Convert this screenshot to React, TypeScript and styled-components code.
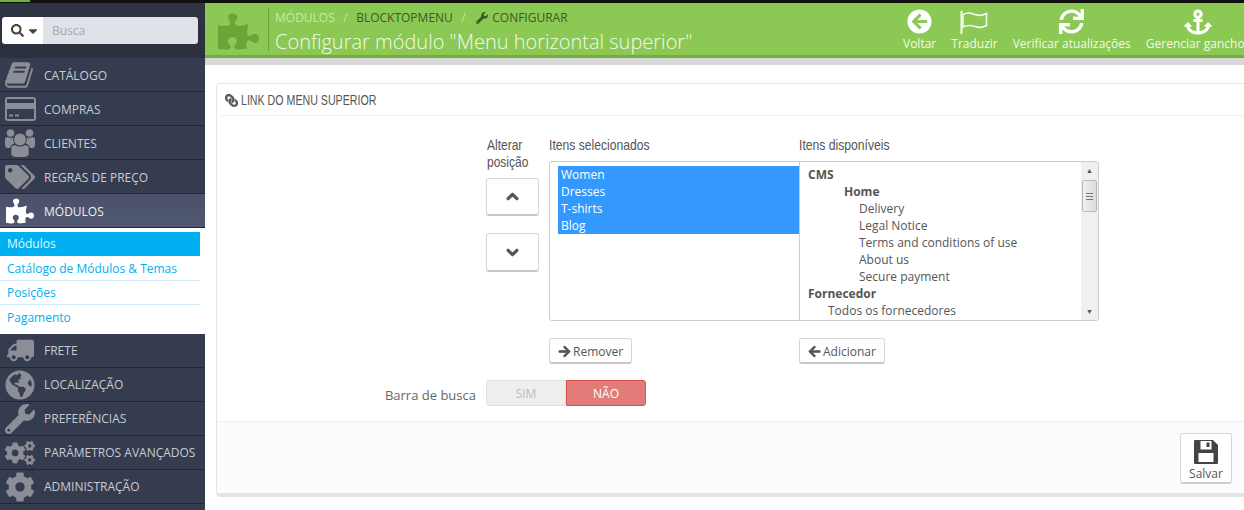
import React from "react";
import styled, { createGlobalStyle } from "styled-components";
import {
  FaAnchor,
  FaArrowCircleLeft,
  FaArrowLeft,
  FaArrowRight,
  FaCaretDown,
  FaChevronDown,
  FaChevronUp,
  FaCog,
  FaCogs,
  FaGlobeAmericas,
  FaLink,
  FaPuzzlePiece,
  FaSearch,
  FaSync,
  FaTags,
  FaTruck,
  FaWrench,
} from "react-icons/fa";

const GlobalStyle = createGlobalStyle`
  html, body {
    margin: 0;
    padding: 0;
    background: #fff;
  }
  body {
    font-family: "Open Sans", "Liberation Sans", sans-serif;
    font-size: 12px;
    color: #555;
  }
  * {
    box-sizing: border-box;
  }
`;

const Page = styled.div`
  width: 1244px;
  height: 510px;
  overflow: hidden;
  display: flex;
  flex-direction: column;
`;

const TopBar = styled.div`
  height: 3px;
  flex: none;
  background: #111;
`;

const TopBarLogo = styled.div`
  width: 30px;
  height: 2px;
  background: #6fb33c;
`;

const Body = styled.div`
  flex: 1;
  min-height: 0;
  display: flex;
`;

/* sidebar */
const Sidebar = styled.nav`
  width: 205px;
  flex: none;
  background: #363c4f;
`;

const SearchArea = styled.div`
  height: 55px;
  padding: 14px 7px 0 2px;
  background: linear-gradient(#2f3443, #2b303e);
`;

const SearchGroup = styled.div`
  height: 27px;
  display: flex;
  border-radius: 3px;
  overflow: hidden;
`;

const SearchButton = styled.div`
  width: 41px;
  display: flex;
  align-items: center;
  gap: 2px;
  padding-left: 9px;
  background: #fff;
  color: #444;
  font-size: 13px;
`;

const SearchInput = styled.div`
  flex: 1;
  display: flex;
  align-items: center;
  padding-left: 9px;
  background: #dfe2e8;
  color: #a4a8b0;
  font-size: 12px;
`;

const NavItem = styled.div<{ $active?: boolean; $lower?: boolean }>`
  height: 34px;
  display: flex;
  align-items: center;
  padding-top: ${(p) => (p.$lower ? 1 : 0)}px;
  border-bottom: 1px solid #23272f;
  background: ${(p) =>
    p.$active ? "linear-gradient(#4a5169, #505771)" : "#363c4f"};
  color: ${(p) => (p.$active ? "#f0f0f0" : "#c8cbd2")};
  font-size: 12px;
  text-transform: uppercase;
`;

const NavIcon = styled.span<{ $active?: boolean }>`
  width: 44px;
  flex: none;
  display: flex;
  justify-content: center;
  padding-right: 4px;
  font-size: ${(p) => (p.$active ? 28 : 30)}px;
  line-height: 0;
  color: ${(p) => (p.$active ? "#fff" : "#8b8e96")};
`;

const FlippedTruck = styled(FaTruck)`
  transform: scaleX(-1);
  font-size: 27px;
`;

const SubMenu = styled.div`
  height: 106px;
  padding: 4px 5px 0 0;
  background: #fff;
`;

const SubItem = styled.div<{ $active?: boolean }>`
  height: 24.4px;
  display: flex;
  align-items: center;
  padding-left: 7px;
  font-size: 12px;
  color: ${(p) => (p.$active ? "#e6f7fe" : "#00aff0")};
  background: ${(p) => (p.$active ? "#00aff0" : "transparent")};
  border-bottom: 1px solid ${(p) => (p.$active ? "#00aff0" : "#d3eefa")};
  &:last-child {
    border-bottom: none;
  }
`;

/* page head */
const Main = styled.main`
  flex: 1;
  min-width: 0;
  display: flex;
  flex-direction: column;
`;

const PageHead = styled.header`
  height: 55px;
  flex: none;
  display: flex;
  background: #8bc954;
  border-bottom: 3px solid #72ad3d;
`;

const HeadPuzzle = styled.div`
  width: 63px;
  flex: none;
  display: flex;
  align-items: center;
  padding-left: 13px;
  margin-top: 5px;
  font-size: 41px;
  line-height: 0;
  color: #6ba538;
`;

const HeadText = styled.div`
  flex: 1;
  margin: 5px 0 4px;
  padding: 2px 0 0 6px;
  border-left: 1px solid #6ba538;
`;

const Breadcrumb = styled.div`
  display: flex;
  align-items: center;
  height: 15px;
  font-size: 12px;
  color: #3b5a22;
`;

const CrumbLink = styled.span<{ $light?: boolean }>`
  color: ${(p) => (p.$light ? "#c9e8ac" : "#3b5a22")};
`;

const CrumbSlash = styled.span`
  margin: 0 8.5px;
  color: #c9e8ac;
`;

const CrumbIcon = styled.span`
  display: inline-flex;
  margin: 0 4px 0 2px;
  font-size: 12px;
`;

const PageTitle = styled.h2`
  margin: 5px 0 0;
  font-size: 20px;
  line-height: 24px;
  font-weight: 300;
  color: #f2f9ea;
  white-space: nowrap;
`;

const Toolbar = styled.div`
  display: flex;
  gap: 15px;
  width: 341px;
  flex: none;
  padding-top: 5px;
  overflow: hidden;
`;

const ToolItem = styled.div`
  display: flex;
  flex: none;
  flex-direction: column;
  align-items: center;
  color: #f2f9ea;
  font-size: 12px;
  white-space: nowrap;
`;

const ToolIcon = styled.span<{ $big?: boolean }>`
  height: 27px;
  display: flex;
  align-items: center;
  color: #fff;
  font-size: ${(p) => (p.$big ? 28 : 25)}px;
`;

const GrayStrip = styled.div`
  height: 7px;
  flex: none;
  background: #d8d8d8;
`;

/* panel */
const Content = styled.div`
  flex: 1;
  min-height: 0;
  padding: 18px 0 0 11px;
`;

const Panel = styled.section`
  width: 1060px;
  height: 414px;
  background: #fff;
  border: 1px solid #e6e6e6;
  border-bottom: 4px solid #e4e4e4;
  border-radius: 4px 0 0 4px;
  display: flex;
  flex-direction: column;
`;

const PanelHead = styled.div`
  height: 32px;
  flex: none;
  margin-left: 3px;
  padding: 1px 0 0 5px;
  display: flex;
  align-items: center;
  gap: 3px;
  border-bottom: 1px solid #eee;
  color: #555;
`;

const PanelIcon = styled(FaLink)`
  font-size: 13px;
  transform: scaleX(-1);
  stroke: currentColor;
  stroke-width: 20;
`;

const Condensed = styled.span<{ $scale: number }>`
  display: inline-block;
  font-family: "Liberation Sans", sans-serif;
  font-size: 15px;
  line-height: 17px;
  white-space: nowrap;
  transform: scaleX(${(p) => p.$scale});
  transform-origin: left center;
`;

const PanelTitle = styled(Condensed)`
  text-transform: uppercase;
  font-size: 14px;
`;

const FormBody = styled.div`
  flex: 1;
  padding: 20px 0 0 269px;
`;

const Picker = styled.div`
  display: flex;
`;

const MoveCol = styled.div`
  width: 63px;
  flex: none;
  display: flex;
  flex-direction: column;
`;

const ListCol = styled.div<{ $wide?: boolean }>`
  width: ${(p) => (p.$wide ? 300 : 250)}px;
  flex: none;
  display: flex;
  flex-direction: column;
  align-items: flex-start;
`;

const ColTitle = styled.div`
  height: 17px;
  color: #555;
`;

const MoveTitle = styled.div`
  display: flex;
  flex-direction: column;
  padding-left: 1px;
  color: #555;
`;

const MoveButton = styled.div<{ $second?: boolean }>`
  width: 53px;
  height: ${(p) => (p.$second ? 39 : 38)}px;
  margin-top: ${(p) => (p.$second ? 17 : 8)}px;
  display: flex;
  align-items: center;
  justify-content: center;
  background: #fff;
  border: 1px solid #d8d8d8;
  border-bottom: 2px solid #c8c8c8;
  border-radius: 3px;
  color: #555;
  font-size: 13px;
  svg {
    stroke: currentColor;
    stroke-width: 45;
  }
`;

const ListBox = styled.div<{ $wide?: boolean }>`
  width: ${(p) => (p.$wide ? 300 : 251)}px;
  height: 160px;
  margin-top: 8px;
  display: flex;
  background: #fff;
  border: 1px solid #ccc;
  border-radius: ${(p) => (p.$wide ? "0 3px 3px 0" : "3px 0 0 3px")};
  font-size: 12px;
  overflow: hidden;
`;

const SelectedOptions = styled.div`
  flex: 1;
  margin: 4px 0 0 8px;
`;

const SelectedOption = styled.div`
  height: 17px;
  padding-left: 3px;
  line-height: 17px;
  background: #3399ff;
  color: #fff;
`;

const Options = styled.div`
  flex: 1;
  padding: 4px 0 0 8px;
  overflow: hidden;
`;

const OptionRow = styled.div<{ $indent?: number; $bold?: boolean }>`
  height: 17px;
  line-height: 17px;
  padding-left: ${(p) => p.$indent ?? 0}px;
  font-weight: ${(p) => (p.$bold ? 700 : 400)};
  white-space: nowrap;
`;

const Scrollbar = styled.div`
  width: 17px;
  flex: none;
  display: flex;
  flex-direction: column;
  background: #f0f0f0;
`;

const ScrollArrow = styled.div`
  height: 17px;
  flex: none;
  display: flex;
  align-items: center;
  justify-content: center;
  color: #505050;
  font-size: 7px;
`;

const ScrollThumb = styled.div`
  width: 15px;
  height: 32px;
  margin: 1px 0 0 1px;
  display: flex;
  align-items: center;
  justify-content: center;
  background: linear-gradient(90deg, #f0f0f0, #dcdcdc);
  border: 1px solid #b8b8b8;
  border-radius: 2px;
`;

const ScrollGrip = styled.div`
  width: 7px;
  height: 7px;
  border-top: 1px solid #777;
  border-bottom: 1px solid #777;
  background: linear-gradient(#777, #777) center / 100% 1px no-repeat;
`;

const ScrollSpacer = styled.div`
  flex: 1;
`;

const ActionButton = styled.div`
  height: 26px;
  margin-top: 17px;
  padding: 1px 8px 0;
  display: flex;
  align-items: center;
  gap: 2px;
  background: #fff;
  border: 1px solid #d8d8d8;
  border-bottom: 2px solid #c8c8c8;
  border-radius: 3px;
  color: #555;
  font-size: 12px;
`;

const ActionIcon = styled.span`
  display: inline-flex;
  font-size: 13px;
  svg {
    stroke: currentColor;
    stroke-width: 25;
  }
`;

const SwitchRow = styled.div`
  position: relative;
  margin-top: 16px;
`;

const SwitchLabel = styled.div`
  position: absolute;
  right: calc(100% + 10px);
  top: 7px;
  font-size: 13px;
  line-height: 16px;
  color: #666;
  white-space: nowrap;
`;

const Switch = styled.div`
  width: 160px;
  height: 26px;
  display: flex;
`;

const SwitchOption = styled.div<{ $on?: boolean }>`
  flex: 1;
  display: flex;
  align-items: center;
  justify-content: center;
  font-size: 12px;
  background: ${(p) => (p.$on ? "#e27c79" : "#eee")};
  color: ${(p) => (p.$on ? "#fff" : "#bbb")};
  border: 1px solid ${(p) => (p.$on ? "#d9534f" : "#e2e2e2")};
  border-radius: ${(p) => (p.$on ? "0 3px 3px 0" : "3px 0 0 3px")};
`;

const PanelFooter = styled.div`
  height: 72px;
  flex: none;
  padding: 11px 0 0 963px;
  background: #fbfcfd;
  border-top: 1px solid #eee;
`;

const SaveButton = styled.div`
  width: 52px;
  height: 51px;
  display: flex;
  flex-direction: column;
  align-items: center;
  padding-top: 6px;
  background: #fff;
  border: 1px solid #d8d8d8;
  border-bottom: 2px solid #cfcfcf;
  border-radius: 3px;
  font-size: 12px;
  line-height: 16px;
  color: #555;
`;

const SaveIconBox = styled.span`
  height: 27px;
  display: flex;
  line-height: 0;
`;

function BookIcon() {
  return (
    <svg width="30" height="30" viewBox="0 0 1792 1792" fill="currentColor">
      <path d="M1639 478q40 57 18 129l-275 906q-19 64-76.5 107.5t-122.5 43.5h-923q-77 0-148.5-53.5t-99.5-131.5q-24-67-2-127 0-4 3-27t4-37q1-8-3-21.5t-3-19.5q2-11 8-21t16.5-23.5 16.5-23.5q23-38 45-91.5t30-91.5q3-10 .5-30t-.5-28q3-11 17-28t17-23q21-36 42-92t25-90q1-9-2.5-32t.5-28q4-13 22-30.5t22-22.5q19-26 42.5-84.5t27.5-96.5q1-8-3-25.5t-2-26.5q2-8 9-18t18-23 17-21q8-12 16.5-30.5t15-35 16-36 19.5-32 26.5-23.5 36-11.5 47.5 5.5l-1 3q38-9 51-9h761q74 0 114 56t18 130l-274 906q-36 119-71.5 153.5t-128.5 34.5h-869q-27 0-38 15-11 16-1 43 24 70 144 70h923q29 0 56-15.5t35-41.5l300-987q7-22 5-57 38 15 59 43zm-1064 2q-4 13 2 22.5t20 9.5h608q13 0 25.5-9.5t16.5-22.5l21-64q4-13-2-22.5t-20-9.5h-608q-13 0-25.5 9.5t-16.5 22.5zm-83 256q-4 13 2 22.5t20 9.5h608q13 0 25.5-9.5t16.5-22.5l21-64q4-13-2-22.5t-20-9.5h-608q-13 0-25.5 9.5t-16.5 22.5z" />
    </svg>
  );
}

function CardIcon() {
  return (
    <svg width="31" height="24" viewBox="0 0 31 24" fill="currentColor">
      <path
        fillRule="evenodd"
        d="M3 0H28A3 3 0 0 1 31 3V21A3 3 0 0 1 28 24H3A3 3 0 0 1 0 21V3A3 3 0 0 1 3 0ZM2 2V6H29V2ZM2 12V22H29V12Z"
      />
      <path d="M4 17.5H8V19.5H4ZM10 17.5H14V19.5H10Z" />
    </svg>
  );
}

function UsersIcon() {
  return (
    <svg width="30" height="28" viewBox="0 0 30 28" fill="currentColor">
      <circle cx="15" cy="10.5" r="6" />
      <circle cx="5.5" cy="4" r="3.8" />
      <circle cx="24.5" cy="4" r="3.8" />
      <path d="M6.5 17.5Q8 16 10 16Q15 19 20 16Q22 16 23.5 17.5Q24 22 23.5 26Q22 28 19 28H11Q8 28 6.5 26Q6 22 6.5 17.5Z" />
      <path d="M0 9.5Q1 8 3 8Q5.5 9.5 8 8.5Q8 12 9.5 14.5Q6 15 5 19H2Q0 18 0 16Z" />
      <path d="M30 9.5Q29 8 27 8Q24.5 9.5 22 8.5Q22 12 20.5 14.5Q24 15 25 19H28Q30 18 30 16Z" />
    </svg>
  );
}

function FlagIcon() {
  return (
    <svg width="28" height="24" viewBox="0 0 28 24" fill="none" stroke="#f4faee">
      <path d="M1.5 1.5V23.5" strokeWidth="2" strokeLinecap="round" />
      <path
        d="M3 4.5C8 2 11 3 15 4.5S22 6 26.5 3.5V15.5C22 18 19 18 15 16.5S8 14.5 3 17Z"
        strokeWidth="1.6"
      />
    </svg>
  );
}

function SaveIcon() {
  return (
    <svg width="24" height="24" viewBox="0 0 24 24">
      <path
        fill="#444"
        fillRule="evenodd"
        d="M1 0H19L24 5V23A1 1 0 0 1 23 24H1A1 1 0 0 1 0 23V1A1 1 0 0 1 1 0ZM6.5 1V9.5H17.5V1ZM4.5 13V22H19.5V13Z"
      />
      <path fill="#444" d="M12.5 2.5H15.5V7H12.5Z" />
    </svg>
  );
}

const navTop = [
  { label: "Catálogo", icon: <BookIcon /> },
  { label: "Compras", icon: <CardIcon /> },
  { label: "Clientes", icon: <UsersIcon /> },
  { label: "Regras de preço", icon: <FaTags /> },
];

const navBottom = [
  { label: "Frete", icon: <FlippedTruck /> },
  { label: "Localização", icon: <FaGlobeAmericas /> },
  { label: "Preferências", icon: <FaWrench /> },
  { label: "Parâmetros avançados", icon: <FaCogs /> },
  { label: "Administração", icon: <FaCog /> },
  { label: "", icon: null },
];

const subItems = ["Módulos", "Catálogo de Módulos & Temas", "Posições", "Pagamento"];

const selected = ["Women", "Dresses", "T-shirts", "Blog"];

const available = [
  { text: "CMS", bold: true },
  { text: "Home", bold: true, indent: 36 },
  { text: "Delivery", indent: 51 },
  { text: "Legal Notice", indent: 51 },
  { text: "Terms and conditions of use", indent: 51 },
  { text: "About us", indent: 51 },
  { text: "Secure payment", indent: 51 },
  { text: "Fornecedor", bold: true },
  { text: "Todos os fornecedores", indent: 20 },
];

export default function App() {
  return (
    <Page>
      <GlobalStyle />
      <TopBar>
        <TopBarLogo />
      </TopBar>
      <Body>
        <Sidebar>
          <SearchArea>
            <SearchGroup>
              <SearchButton>
                <FaSearch />
                <FaCaretDown size={14} />
              </SearchButton>
              <SearchInput>Busca</SearchInput>
            </SearchGroup>
          </SearchArea>
          {navTop.map((n) => (
            <NavItem key={n.label} $lower>
              <NavIcon>{n.icon}</NavIcon>
              {n.label}
            </NavItem>
          ))}
          <NavItem $active $lower>
            <NavIcon $active>
              <FaPuzzlePiece />
            </NavIcon>
            Módulos
          </NavItem>
          <SubMenu>
            {subItems.map((s, i) => (
              <SubItem key={s} $active={i === 0}>
                {s}
              </SubItem>
            ))}
          </SubMenu>
          {navBottom.map((n) => (
            <NavItem key={n.label}>
              <NavIcon>{n.icon}</NavIcon>
              {n.label}
            </NavItem>
          ))}
        </Sidebar>
        <Main>
          <PageHead>
            <HeadPuzzle>
              <FaPuzzlePiece />
            </HeadPuzzle>
            <HeadText>
              <Breadcrumb>
                <CrumbLink $light>MÓDULOS</CrumbLink>
                <CrumbSlash>/</CrumbSlash>
                <CrumbLink>BLOCKTOPMENU</CrumbLink>
                <CrumbSlash>/</CrumbSlash>
                <CrumbIcon>
                  <FaWrench />
                </CrumbIcon>
                <CrumbLink>CONFIGURAR</CrumbLink>
              </Breadcrumb>
              <PageTitle>Configurar módulo "Menu horizontal superior"</PageTitle>
            </HeadText>
            <Toolbar>
              <ToolItem>
                <ToolIcon>
                  <FaArrowCircleLeft />
                </ToolIcon>
                Voltar
              </ToolItem>
              <ToolItem>
                <ToolIcon>
                  <FlagIcon />
                </ToolIcon>
                Traduzir
              </ToolItem>
              <ToolItem>
                <ToolIcon>
                  <FaSync />
                </ToolIcon>
                Verificar atualizações
              </ToolItem>
              <ToolItem>
                <ToolIcon $big>
                  <FaAnchor />
                </ToolIcon>
                Gerenciar ganchos
              </ToolItem>
            </Toolbar>
          </PageHead>
          <GrayStrip />
          <Content>
            <Panel>
              <PanelHead>
                <PanelIcon />
                <PanelTitle $scale={0.76}>Link do menu superior</PanelTitle>
              </PanelHead>
              <FormBody>
                <Picker>
                  <MoveCol>
                    <MoveTitle>
                      <Condensed $scale={0.8}>Alterar</Condensed>
                      <Condensed $scale={0.8}>posição</Condensed>
                    </MoveTitle>
                    <MoveButton>
                      <FaChevronUp />
                    </MoveButton>
                    <MoveButton $second>
                      <FaChevronDown />
                    </MoveButton>
                  </MoveCol>
                  <ListCol>
                    <ColTitle>
                      <Condensed $scale={0.81}>Itens selecionados</Condensed>
                    </ColTitle>
                    <ListBox>
                      <SelectedOptions>
                        {selected.map((s) => (
                          <SelectedOption key={s}>{s}</SelectedOption>
                        ))}
                      </SelectedOptions>
                    </ListBox>
                    <ActionButton>
                      <ActionIcon>
                        <FaArrowRight />
                      </ActionIcon>
                      Remover
                    </ActionButton>
                  </ListCol>
                  <ListCol $wide>
                    <ColTitle>
                      <Condensed $scale={0.81}>Itens disponíveis</Condensed>
                    </ColTitle>
                    <ListBox $wide>
                      <Options>
                        {available.map((o) => (
                          <OptionRow key={o.text} $bold={o.bold} $indent={o.indent}>
                            {o.text}
                          </OptionRow>
                        ))}
                      </Options>
                      <Scrollbar>
                        <ScrollArrow>▲</ScrollArrow>
                        <ScrollThumb>
                          <ScrollGrip />
                        </ScrollThumb>
                        <ScrollSpacer />
                        <ScrollArrow>▼</ScrollArrow>
                      </Scrollbar>
                    </ListBox>
                    <ActionButton>
                      <ActionIcon>
                        <FaArrowLeft />
                      </ActionIcon>
                      Adicionar
                    </ActionButton>
                  </ListCol>
                </Picker>
                <SwitchRow>
                  <SwitchLabel>Barra de busca</SwitchLabel>
                  <Switch>
                    <SwitchOption>SIM</SwitchOption>
                    <SwitchOption $on>NÃO</SwitchOption>
                  </Switch>
                </SwitchRow>
              </FormBody>
              <PanelFooter>
                <SaveButton>
                  <SaveIconBox>
                    <SaveIcon />
                  </SaveIconBox>
                  Salvar
                </SaveButton>
              </PanelFooter>
            </Panel>
          </Content>
        </Main>
      </Body>
    </Page>
  );
}
